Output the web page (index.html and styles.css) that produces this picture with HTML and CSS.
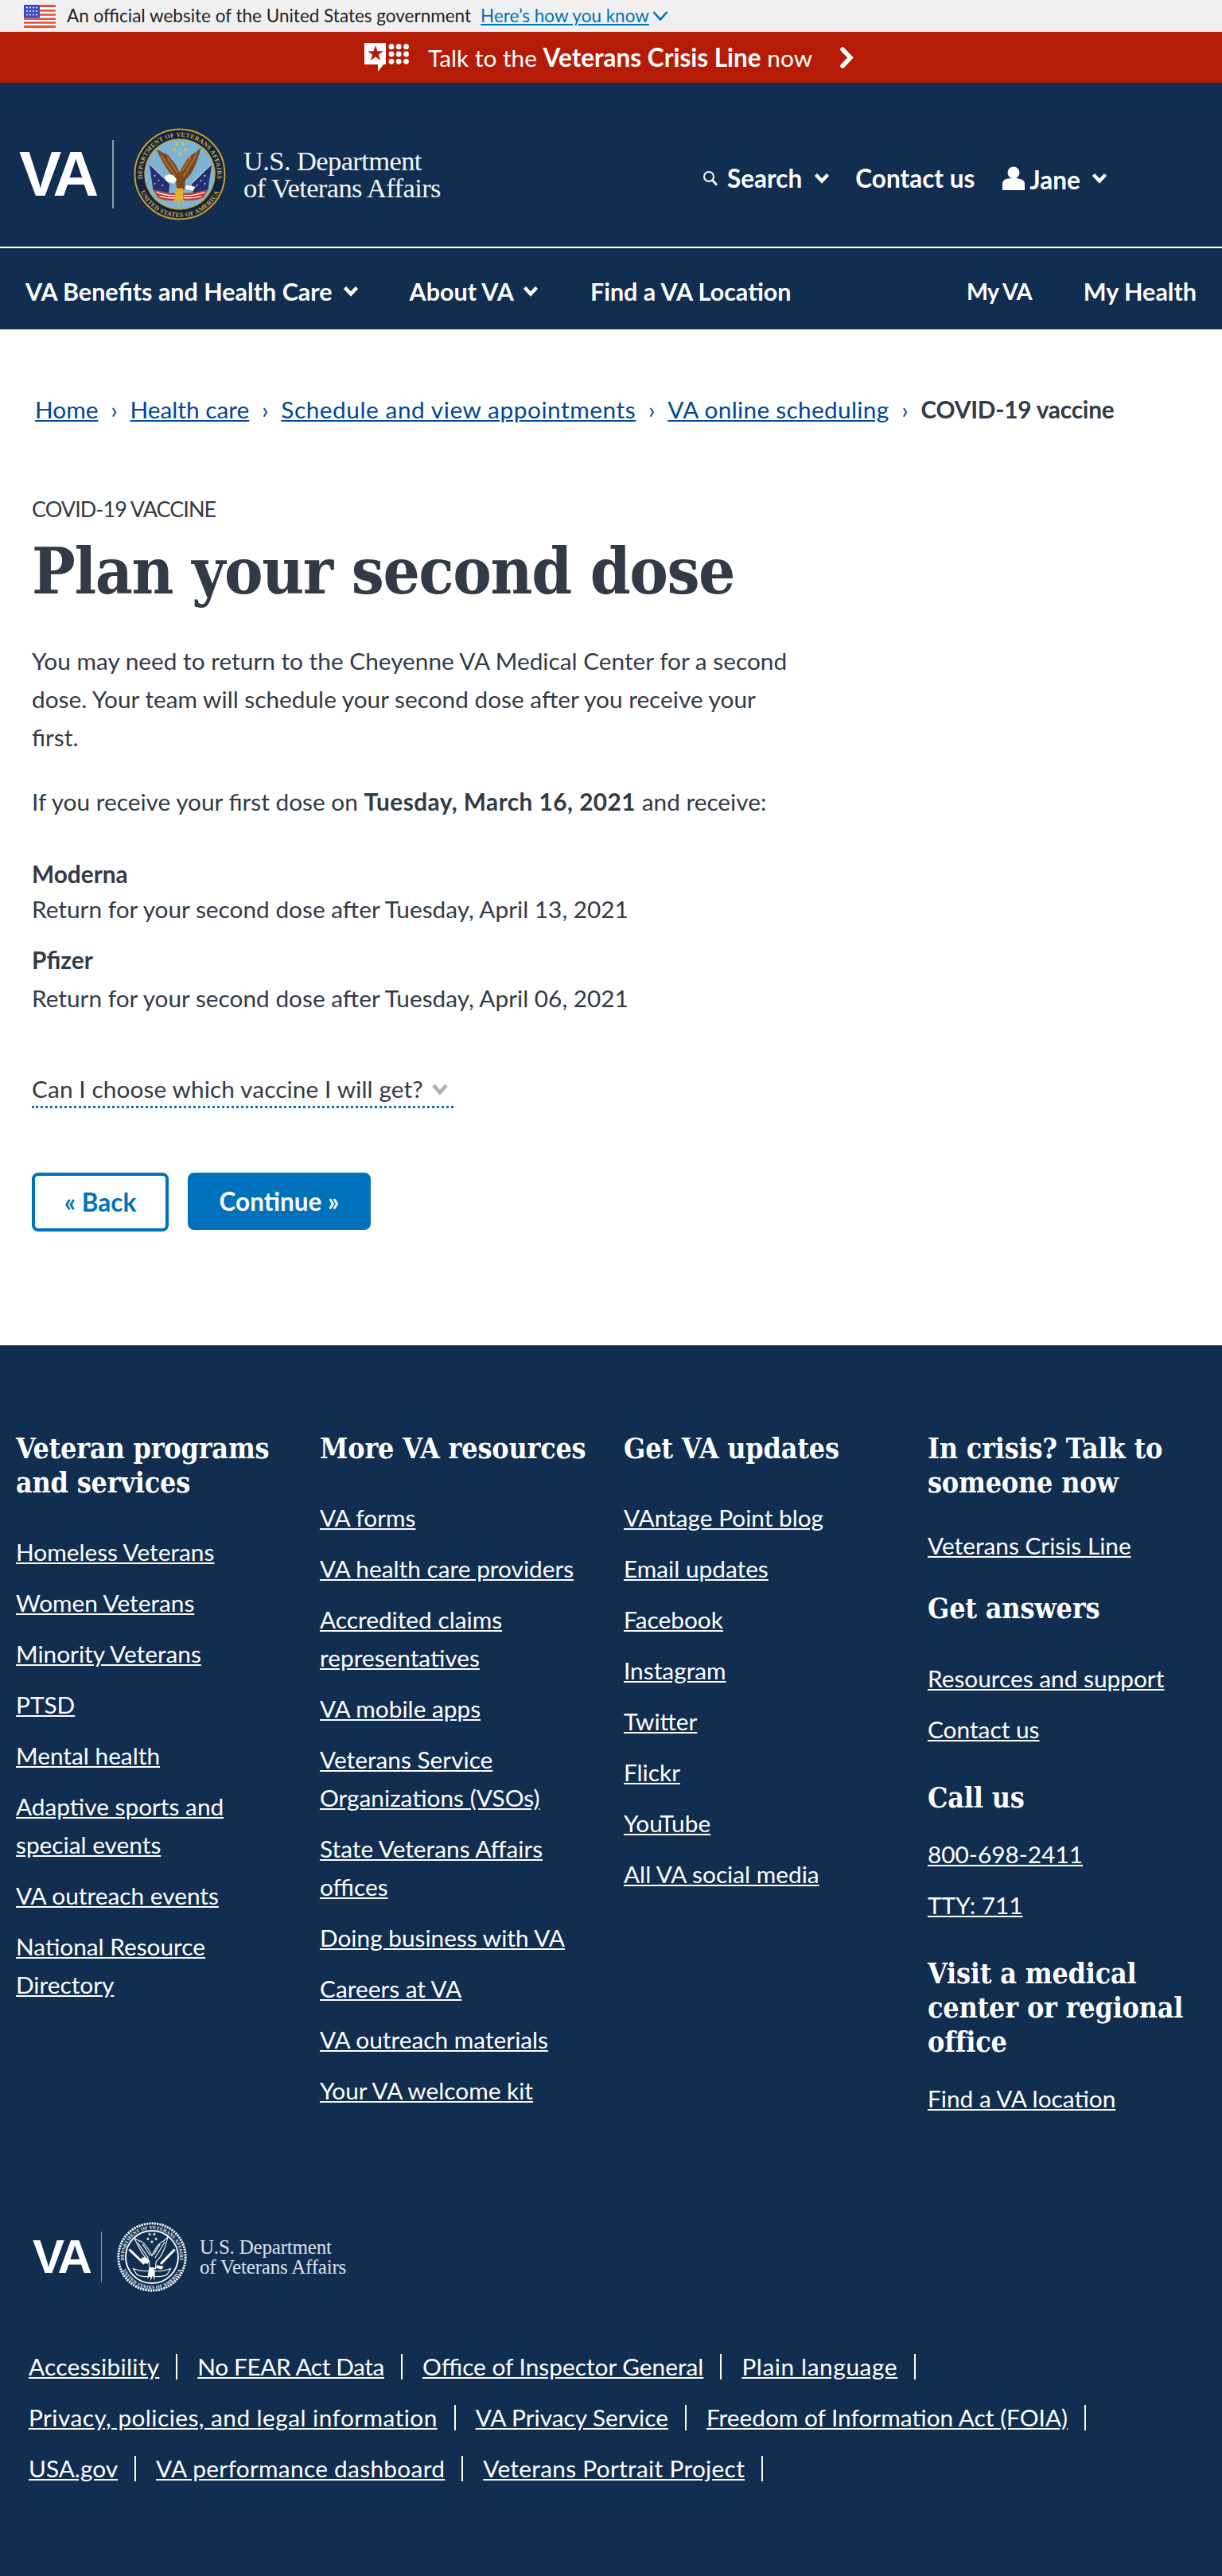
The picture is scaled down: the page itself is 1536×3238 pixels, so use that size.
FILE: index.html
```html
<!DOCTYPE html>
<html lang="en">
<head>
<meta charset="utf-8">
<title>Plan your second dose</title>
<link rel="stylesheet" href="styles.css">
</head>
<body>
<div class="gov">
  <svg class="flag" viewBox="0 0 40 29"><rect width="40" height="29" fill="#fff"/><g fill="#e2553d"><rect width="40" height="3"/><rect y="6" width="40" height="2.6"/><rect y="11.2" width="40" height="2.6"/><rect y="16.4" width="40" height="2.6"/><rect y="21.2" width="40" height="2.6"/><rect y="26" width="40" height="3"/></g><rect width="20" height="16.5" fill="#3a4cc4"/><g fill="#fff"><circle cx="4" cy="3.5" r="1"/><circle cx="8" cy="3.5" r="1"/><circle cx="12" cy="3.5" r="1"/><circle cx="16" cy="3.5" r="1"/><circle cx="4" cy="8" r="1"/><circle cx="8" cy="8" r="1"/><circle cx="12" cy="8" r="1"/><circle cx="16" cy="8" r="1"/><circle cx="4" cy="12.5" r="1"/><circle cx="8" cy="12.5" r="1"/><circle cx="12" cy="12.5" r="1"/><circle cx="16" cy="12.5" r="1"/></g></svg>
  <span class="gov-text">An official website of the United States government</span>
  <a class="gov-link" href="#">Here’s how you know</a>
  <svg class="gov-chev" viewBox="0 0 20 14"><path d="M1.500 2 L10 11.500 L18.500 2" fill="none" stroke="#0071bb" stroke-width="2.600"/></svg>
</div>
<div class="crisis">
  <svg class="crisis-icon" viewBox="0 0 57 36"><path d="M1 0H26a1 1 0 0 1 1 1V26a1 1 0 0 1-1 1H24L17 36V27H1a1 1 0 0 1-1-1V1a1 1 0 0 1 1-1Z" fill="#fff"/><path d="M14 3 16.400 10.200H24L17.900 14.700 20.200 22 14 17.500 7.800 22 10.100 14.700 4 10.200H11.600Z" fill="#b51c08"/><g fill="#fff"><circle cx="34" cy="4.700" r="3.400"/><circle cx="43.200" cy="4.700" r="3.400"/><circle cx="52.500" cy="4.700" r="3.400"/><circle cx="34" cy="14" r="3.400"/><circle cx="43.200" cy="14" r="3.400"/><circle cx="52.500" cy="14" r="3.400"/><circle cx="34" cy="23.300" r="3.400"/><circle cx="43.200" cy="23.300" r="3.400"/><circle cx="52.500" cy="23.300" r="3.400"/></g></svg>
  <span class="crisis-text">Talk to the <strong>Veterans Crisis Line</strong> now</span>
  <svg class="crisis-chev" viewBox="0 0 19 27"><path d="M4 3 L14 13.500 L4 24" fill="none" stroke="#fff" stroke-width="5.500" stroke-linecap="round"/></svg>
</div>
<header class="masthead">
  <div class="logo-big">
    <span class="va-mark">VA</span>
    <span class="logo-rule"></span>
    <svg class="seal" viewBox="0 0 120 120">
      <defs>
        <path id="arcTop" d="M18.400 84A48 48 0 1 1 101.600 84"/>
        <path id="arcBot" d="M10.200 83.200A55 55 0 0 0 109.800 83.200"/>
        <path id="star" d="M0-3 .9-.9 3-.9 1.300.4 1.900 2.500 0 1.200-1.900 2.500-1.300.4-3-.9-.9-.9Z"/>
      </defs>
      <circle cx="60" cy="60" r="59.500" fill="#0f2440"/>
      <circle cx="60" cy="60" r="57.500" fill="none" stroke="#c9a23c" stroke-width="2"/>
      <circle cx="60" cy="60" r="45.500" fill="#c9a23c"/>
      <circle cx="60" cy="60" r="44" fill="#7fb3d5"/>
      <text class="seal-type seal-gold"><textPath href="#arcTop" startOffset="50%">DEPARTMENT OF VETERANS AFFAIRS</textPath></text>
      <text class="seal-type seal-gold"><textPath href="#arcBot" startOffset="50%">UNITED STATES OF AMERICA</textPath></text>
      <g fill="#e8c23a"><use href="#star" x="56" y="21"/><use href="#star" x="64" y="21"/><use href="#star" x="53" y="29"/><use href="#star" x="67" y="29"/><use href="#star" x="60" y="34"/></g>
      <path d="M21 47 L47 72 L46 84 L26 80Z" fill="#24306e"/>
      <path d="M101 47 L75 72 L77 84 L96 80Z" fill="#24306e"/>
      <path d="M21 47 L47 72 M101 47 L75 72" stroke="#e9eef3" stroke-width="1"/>
      <g fill="#fff"><circle cx="28" cy="62" r=".9"/><circle cx="33" cy="68" r=".9"/><circle cx="28" cy="72" r=".9"/><circle cx="38" cy="74" r=".9"/><circle cx="92" cy="62" r=".9"/><circle cx="87" cy="68" r=".9"/><circle cx="92" cy="72" r=".9"/><circle cx="82" cy="74" r=".9"/></g>
      <path d="M26 80 Q42 85 56 84 L56 93 Q42 95 32 90Z" fill="#c8352c"/>
      <path d="M96 80 Q78 85 64 84 L64 93 Q78 95 90 90Z" fill="#c8352c"/>
      <path d="M30 83 Q44 88 55 87 M34 88 Q44 91 55 90 M92 83 Q76 88 65 87 M88 88 Q76 91 65 90" fill="none" stroke="#fff" stroke-width="1.300"/>
      <path d="M55 68 C47 60 38 46 30 28 C33 31 36 29 38 33 C41 31 43 35 45 36 C47 36 49 42 52 44 C55 48 57 52 60 58 C63 50 67 45 70 40 C73 38 75 35 77 34 C80 34 83 29 87 26 C83 44 76 60 67 68 L66 80 L56 78Z" fill="#7c4a1e"/>
      <path d="M36 36 L54 62 M44 38 L57 58 M82 34 L65 62 M74 38 L63 56" stroke="#a86f33" stroke-width="2" fill="none"/>
      <path d="M41 63 C46 58 53 60 56 67 L52 72 L43 69 Z M68 74 L80 76 L77 81 L67 79Z" fill="#fff"/>
      <path d="M55 78 L52 98 L57 92 L58 101 L61 92 L65 100 L64 78Z" fill="#e0b22e"/>
    </svg>
    <span class="dept-big">U.S. Department<br>of Veterans Affairs</span>
  </div>
  <nav class="util">
    <svg class="search-ico" viewBox="0 0 20 20"><circle cx="8" cy="8" r="6" fill="none" stroke="#fff" stroke-width="2"/><path d="M12.500 12.500 L18 18.500" stroke="#fff" stroke-width="2.600"/></svg>
    <span class="util-item util-search">Search</span>
    <svg class="chev chev-search" viewBox="0 0 20 14"><path d="M2.500 2.500 L10 10.500 L17.500 2.500" /></svg>
    <span class="util-item util-contact">Contact us</span>
    <svg class="user-ico" viewBox="0 0 28 30"><circle cx="14" cy="8" r="7.500" fill="#fff"/><path d="M0 30V22C0 17 5 15 14 15S28 17 28 22V30Z" fill="#fff"/></svg>
    <span class="util-item util-jane">Jane</span>
    <svg class="chev chev-jane" viewBox="0 0 20 14"><path d="M2.500 2.500 L10 10.500 L17.500 2.500" /></svg>
  </nav>
</header>
<nav class="mainnav">
  <span class="nav-item nav-benefits">VA Benefits and Health Care</span>
  <svg class="chev chev-benefits" viewBox="0 0 20 14"><path d="M2.500 2.500 L10 10.500 L17.500 2.500" /></svg>
  <span class="nav-item nav-about">About VA</span>
  <svg class="chev chev-about" viewBox="0 0 20 14"><path d="M2.500 2.500 L10 10.500 L17.500 2.500" /></svg>
  <span class="nav-item nav-find">Find a VA Location</span>
  <span class="nav-item nav-myva">My VA</span>
  <span class="nav-item nav-myhealth">My Health</span>
</nav>
<main class="main">
  <ol class="crumbs">
    <li><a href="#">Home</a></li><li class="sep">›</li>
    <li><a href="#">Health care</a></li><li class="sep">›</li>
    <li><a class="crumb-schedule" href="#">Schedule and view appointments</a></li><li class="sep">›</li>
    <li><a class="crumb-online" href="#">VA online scheduling</a></li><li class="sep">›</li>
    <li class="crumb-current">COVID-19 vaccine</li>
  </ol>
  <div class="eyebrow">COVID-19 VACCINE</div>
  <h1 class="title">Plan your second dose</h1>
  <p class="para">You may need to return to the Cheyenne VA Medical Center for a second dose. Your team will schedule your second dose after you receive your first.</p>
  <p class="para para-second">If you receive your first dose on <strong>Tuesday, March 16, 2021</strong> and receive:</p>
  <div class="dose dose-first"><strong>Moderna</strong>Return for your second dose after Tuesday, April 13, 2021</div>
  <div class="dose dose-second"><strong>Pfizer</strong>Return for your second dose after Tuesday, April 06, 2021</div>
  <div class="info"><span>Can I choose which vaccine I will get?</span><svg class="info-chev" viewBox="0 0 20 16"><path d="M2.500 3 L10 11.500 L17.500 3"/></svg></div>
  <div class="actions">
    <a class="btn btn-back" href="#">« Back</a>
    <a class="btn btn-next" href="#">Continue »</a>
  </div>
</main>
<footer class="footer">
  <div class="cols">
    <div class="col">
      <h3 class="fh fh-first fh-two">Veteran programs and services</h3>
      <ul class="flinks">
        <li><a href="#">Homeless Veterans</a></li>
        <li><a href="#">Women Veterans</a></li>
        <li><a href="#">Minority Veterans</a></li>
        <li><a href="#">PTSD</a></li>
        <li><a href="#">Mental health</a></li>
        <li><a href="#">Adaptive sports and special events</a></li>
        <li><a href="#">VA outreach events</a></li>
        <li><a href="#">National Resource Directory</a></li>
      </ul>
    </div>
    <div class="col">
      <h3 class="fh fh-first">More VA resources</h3>
      <ul class="flinks">
        <li><a href="#">VA forms</a></li>
        <li><a href="#">VA health care providers</a></li>
        <li><a href="#">Accredited claims representatives</a></li>
        <li><a href="#">VA mobile apps</a></li>
        <li><a href="#">Veterans Service Organizations (VSOs)</a></li>
        <li><a href="#">State Veterans Affairs offices</a></li>
        <li><a href="#">Doing business with VA</a></li>
        <li><a href="#">Careers at VA</a></li>
        <li><a href="#">VA outreach materials</a></li>
        <li><a href="#">Your VA welcome kit</a></li>
      </ul>
    </div>
    <div class="col">
      <h3 class="fh fh-first">Get VA updates</h3>
      <ul class="flinks">
        <li><a href="#">VAntage Point blog</a></li>
        <li><a href="#">Email updates</a></li>
        <li><a href="#">Facebook</a></li>
        <li><a href="#">Instagram</a></li>
        <li><a href="#">Twitter</a></li>
        <li><a href="#">Flickr</a></li>
        <li><a href="#">YouTube</a></li>
        <li><a href="#">All VA social media</a></li>
      </ul>
    </div>
    <div class="col">
      <h3 class="fh fh-crisis">In crisis? Talk to someone now</h3>
      <ul class="flinks"><li><a href="#">Veterans Crisis Line</a></li></ul>
      <h3 class="fh fh-answers">Get answers</h3>
      <ul class="flinks"><li><a href="#">Resources and support</a></li><li><a href="#">Contact us</a></li></ul>
      <h3 class="fh fh-call">Call us</h3>
      <ul class="flinks"><li><a href="#">800-698-2411</a></li><li><a href="#">TTY: 711</a></li></ul>
      <h3 class="fh fh-call">Visit a medical center or regional office</h3>
      <ul class="flinks"><li><a href="#">Find a VA location</a></li></ul>
    </div>
  </div>
  <div class="logo-small">
    <span class="va-mark va-small">VA</span>
    <span class="logo-rule rule-small"></span>
    <svg class="seal-small" viewBox="0 0 120 120">
      <circle cx="60" cy="60" r="57.500" fill="none" stroke="#fff" stroke-width="4" stroke-dasharray="3 1.500"/>
      <text class="seal-type seal-white"><textPath href="#arcTop" startOffset="50%">DEPARTMENT OF VETERANS AFFAIRS</textPath></text>
      <text class="seal-type seal-white"><textPath href="#arcBot" startOffset="50%">UNITED STATES OF AMERICA</textPath></text>
      <circle cx="60" cy="60" r="45" fill="none" stroke="#fff" stroke-width="2.500"/>
      <g fill="#fff"><use href="#star" x="56" y="21"/><use href="#star" x="64" y="21"/><use href="#star" x="53" y="29"/><use href="#star" x="67" y="29"/><use href="#star" x="60" y="34"/></g>
      <path d="M21 47 L47 72 M99 47 L75 72" stroke="#fff" stroke-width="4"/>
      <path d="M55 68 C47 60 38 46 30 28 C33 31 36 29 38 33 C41 31 43 35 45 36 C47 36 49 42 52 44 C55 48 57 52 60 58 C63 50 67 45 70 40 C73 38 75 35 77 34 C80 34 83 29 87 26 C83 44 76 60 67 68 L66 80 L56 78Z" fill="none" stroke="#fff" stroke-width="1.500"/>
      <path d="M36 36 L54 62 M44 38 L57 58 M82 34 L65 62 M74 38 L63 56" stroke="#fff" stroke-width="1.500"/>
      <path d="M41 63 C46 58 53 60 56 67 L52 72 L43 69Z M68 74 L80 76 L77 81 L67 79Z" fill="#fff"/>
      <path d="M28 80 Q42 85 56 84 L56 93 Q42 95 34 90Z M92 80 Q78 85 64 84 L64 93 Q78 95 86 90Z" fill="none" stroke="#fff" stroke-width="1.500"/>
      <path d="M55 78 L52 98 L57 92 L58 101 L61 92 L65 100 L64 78Z" fill="#fff"/>
    </svg>
    <span class="dept-small">U.S. Department<br>of Veterans Affairs</span>
  </div>
  <div class="legal">
    <ul class="legal-row">
      <li><a class="ls-a" href="#">Accessibility</a></li>
      <li><a class="ls-n" href="#">No FEAR Act Data</a></li>
      <li><a href="#">Office of Inspector General</a></li>
      <li><a class="ls-p" href="#">Plain language</a></li>
    </ul>
    <ul class="legal-row">
      <li><a class="ls-w" href="#">Privacy, policies, and legal information</a></li>
      <li><a href="#">VA Privacy Service</a></li>
      <li><a href="#">Freedom of Information Act (FOIA)</a></li>
    </ul>
    <ul class="legal-row">
      <li><a href="#">USA.gov</a></li>
      <li><a class="ls-a" href="#">VA performance dashboard</a></li>
      <li><a class="ls-a" href="#">Veterans Portrait Project</a></li>
    </ul>
  </div>
</footer>
</body>
</html>
```
FILE: styles.css
```css
* { box-sizing: border-box; }
html, body { margin: 0; padding: 0; }
body {
  width: 1536px;
  font-family: "Lato", "Noto Sans", sans-serif;
  font-size: 29.8px;
  line-height: 48px;
  color: #323a45;
  background: #fff;
}
a { color: inherit; }
strong { font-weight: 700; }
ul, ol { list-style: none; margin: 0; padding: 0; }

/* gov banner */
.gov {
  height: 40px;
  background: #f0f0f0;
  display: flex;
  align-items: center;
  padding-left: 30px;
  font-size: 22.5px;
  line-height: 30px;
  color: #212121;
}
.flag { width: 40px; height: 29px; flex: none; }
.gov-text { margin-left: 14px; }
.gov-link { margin-left: 12px; color: #0071bb; text-decoration: underline; }
.gov-chev { width: 20px; height: 14px; margin-left: 4px; }

/* crisis bar */
.crisis {
  height: 64px;
  background: #b51c08;
  display: flex;
  align-items: center;
  padding-left: 458px;
  color: #fff;
}
.crisis-icon { width: 57px; height: 36px; flex: none; }
.crisis-text { margin-left: 23px; }
.crisis-text strong { font-size: 31.5px; }
.crisis-chev { width: 19px; height: 27px; margin-left: 34px; }

/* masthead */
.masthead {
  height: 208px;
  background: #112e51;
  border-bottom: 2px solid #fff;
  display: flex;
  align-items: center;
  color: #fff;
}
.logo-big { display: flex; align-items: center; padding-left: 24px; width: 883px; margin-top: 24px; }
.va-mark {
  font-family: "Liberation Sans", Arial, sans-serif;
  font-weight: 700;
  font-size: 80px;
  line-height: 90px;
  letter-spacing: -5px;
  color: #fff;
  width: 96px;
}
.logo-rule { width: 2px; height: 86px; background: #8d9caf; margin-left: 21px; }
.seal { width: 118px; height: 118px; margin-left: 24px; flex: none; }
.seal-small { width: 88px; height: 88px; margin-left: 19px; flex: none; }
.seal-type { font-family: "Liberation Serif", serif; font-weight: 700; font-size: 8.2px; text-anchor: middle; letter-spacing: 0.3px; }
.seal-gold { fill: #d7ae44; }
.seal-white { fill: #fff; }
.dept-big {
  font-family: "Liberation Serif", serif;
  font-size: 34.5px;
  line-height: 34px;
  letter-spacing: -0.6px;
  color: #f4f6f8;
  margin-left: 21px;
  white-space: nowrap;
}
.util { display: flex; align-items: center; font-weight: 700; font-size: 31.5px; color: #fff; margin-top: 34px; }
.search-ico { width: 20px; height: 20px; flex: none; }
.util-item { white-space: nowrap; }
.util-search { margin-left: 11px; }
.chev { fill: none; stroke: #fff; stroke-width: 4.4px; width: 20px; height: 14px; flex: none; }
.chev-search { margin-left: 15px; }
.util-contact { margin-left: 32px; }
.user-ico { width: 28px; height: 30px; margin-left: 35px; flex: none; }
.util-jane { margin-left: 6px; position: relative; top: 2px; }
.chev-jane { margin-left: 14px; }

/* main nav */
.mainnav {
  height: 102px;
  background: #112e51;
  display: flex;
  align-items: center;
  padding: 6px 32px 0;
  color: #fff;
  font-weight: 700;
  font-size: 30.5px;
}
.nav-item { white-space: nowrap; }
.chev-benefits { margin-left: 13px; }
.nav-about { margin-left: 64px; }
.chev-about { margin-left: 11px; }
.nav-find { margin-left: 65px; }
.nav-myva { margin-left: auto; font-size: 28.5px; letter-spacing: -0.6px; }
.nav-myhealth { margin-left: 65px; }

/* main */
.main { height: 1277px; padding: 77px 40px 0; }
.crumbs { display: flex; align-items: center; padding-left: 4px; white-space: nowrap; }
.crumbs a { color: #004795; }
.crumb-schedule { letter-spacing: 0.55px; }
.crumb-online { letter-spacing: 0.3px; }
.sep { width: 40px; text-align: center; color: #004795; font-size: 28px; }
.crumb-current { font-weight: 700; letter-spacing: -0.2px; }
.eyebrow { margin-top: 77px; font-size: 27px; letter-spacing: -0.95px; }
.title {
  font-family: "DejaVu Serif Condensed", "DejaVu Serif", serif;
  font-weight: 700;
  font-size: 81px;
  line-height: 96px;
  letter-spacing: -1.4px;
  margin: 6px 0 0;
  color: #323a45;
}
.para { margin: 41px 0 0; width: 960px; }
.para-second { margin-top: 33px; white-space: nowrap; }
.para-second strong { letter-spacing: 0.45px; }
.dose strong { display: block; }
.dose-first { margin-top: 47px; }
.dose-first strong { line-height: 40px; }
.dose-second { margin-top: 16px; }
.info {
  margin-top: 69px;
  width: 530px;
  display: flex;
  align-items: center;
  border-bottom: 3px dotted #0071bb;
  line-height: 42px;
  letter-spacing: 0.1px;
}
.info-chev { width: 22px; height: 17px; margin-left: 10px; fill: none; stroke: #aeb0b5; stroke-width: 4.4px; }
.actions { display: flex; gap: 24px; margin-top: 81px; align-items: flex-start; }
.btn {
  font-weight: 700;
  font-size: 31.5px;
  text-decoration: none;
  border-radius: 8px;
  display: flex;
  align-items: center;
  justify-content: center;
}
.btn-back { width: 172px; height: 74px; border: 4px solid #0071bb; color: #0071bb; }
.btn-next { width: 230px; height: 72px; background: #0071bb; color: #fff; }

/* footer */
.footer { background: #112e51; color: #fff; height: 1547px; padding-top: 108px; }
.cols { display: grid; grid-template-columns: repeat(4, 382px); padding-left: 20px; }
.col { padding-right: 36px; }
.fh {
  font-family: "DejaVu Serif Condensed", "DejaVu Serif", serif;
  font-weight: 700;
  font-size: 35.6px;
  line-height: 43px;
  letter-spacing: -0.2px;
  margin: 0;
}
.fh-first { margin-bottom: 42px; }
.fh-crisis { margin-bottom: 34px; }
.fh-answers { margin: 33px 0 43px; }
.fh-call { margin: 40px 0 26px; }
.flinks { display: flex; flex-direction: column; gap: 16px; }
.logo-small { display: flex; align-items: center; margin-top: 131px; padding-left: 41px; }
.va-small { font-size: 60px; line-height: 60px; letter-spacing: -4px; width: 70px; }
.rule-small { height: 64px; margin-left: 16px; width: 1px; }
.dept-small {
  font-family: "Liberation Serif", serif;
  font-size: 25px;
  line-height: 25px;
  letter-spacing: -0.2px;
  color: #dfe3e8;
  margin-left: 16px;
}
.legal { display: flex; flex-direction: column; gap: 16px; margin-top: 70px; padding-left: 36px; }
.legal-row { display: flex; }
.legal-row li { display: flex; align-items: center; }
.legal-row li::after { content: ""; width: 2px; height: 32px; background: #fff; margin: 0 25px 0 21px; }
.ls-a { letter-spacing: 0.3px; }
.ls-n { letter-spacing: -0.4px; }
.ls-p { letter-spacing: 0.6px; }
.ls-w { letter-spacing: 0.45px; }
```
